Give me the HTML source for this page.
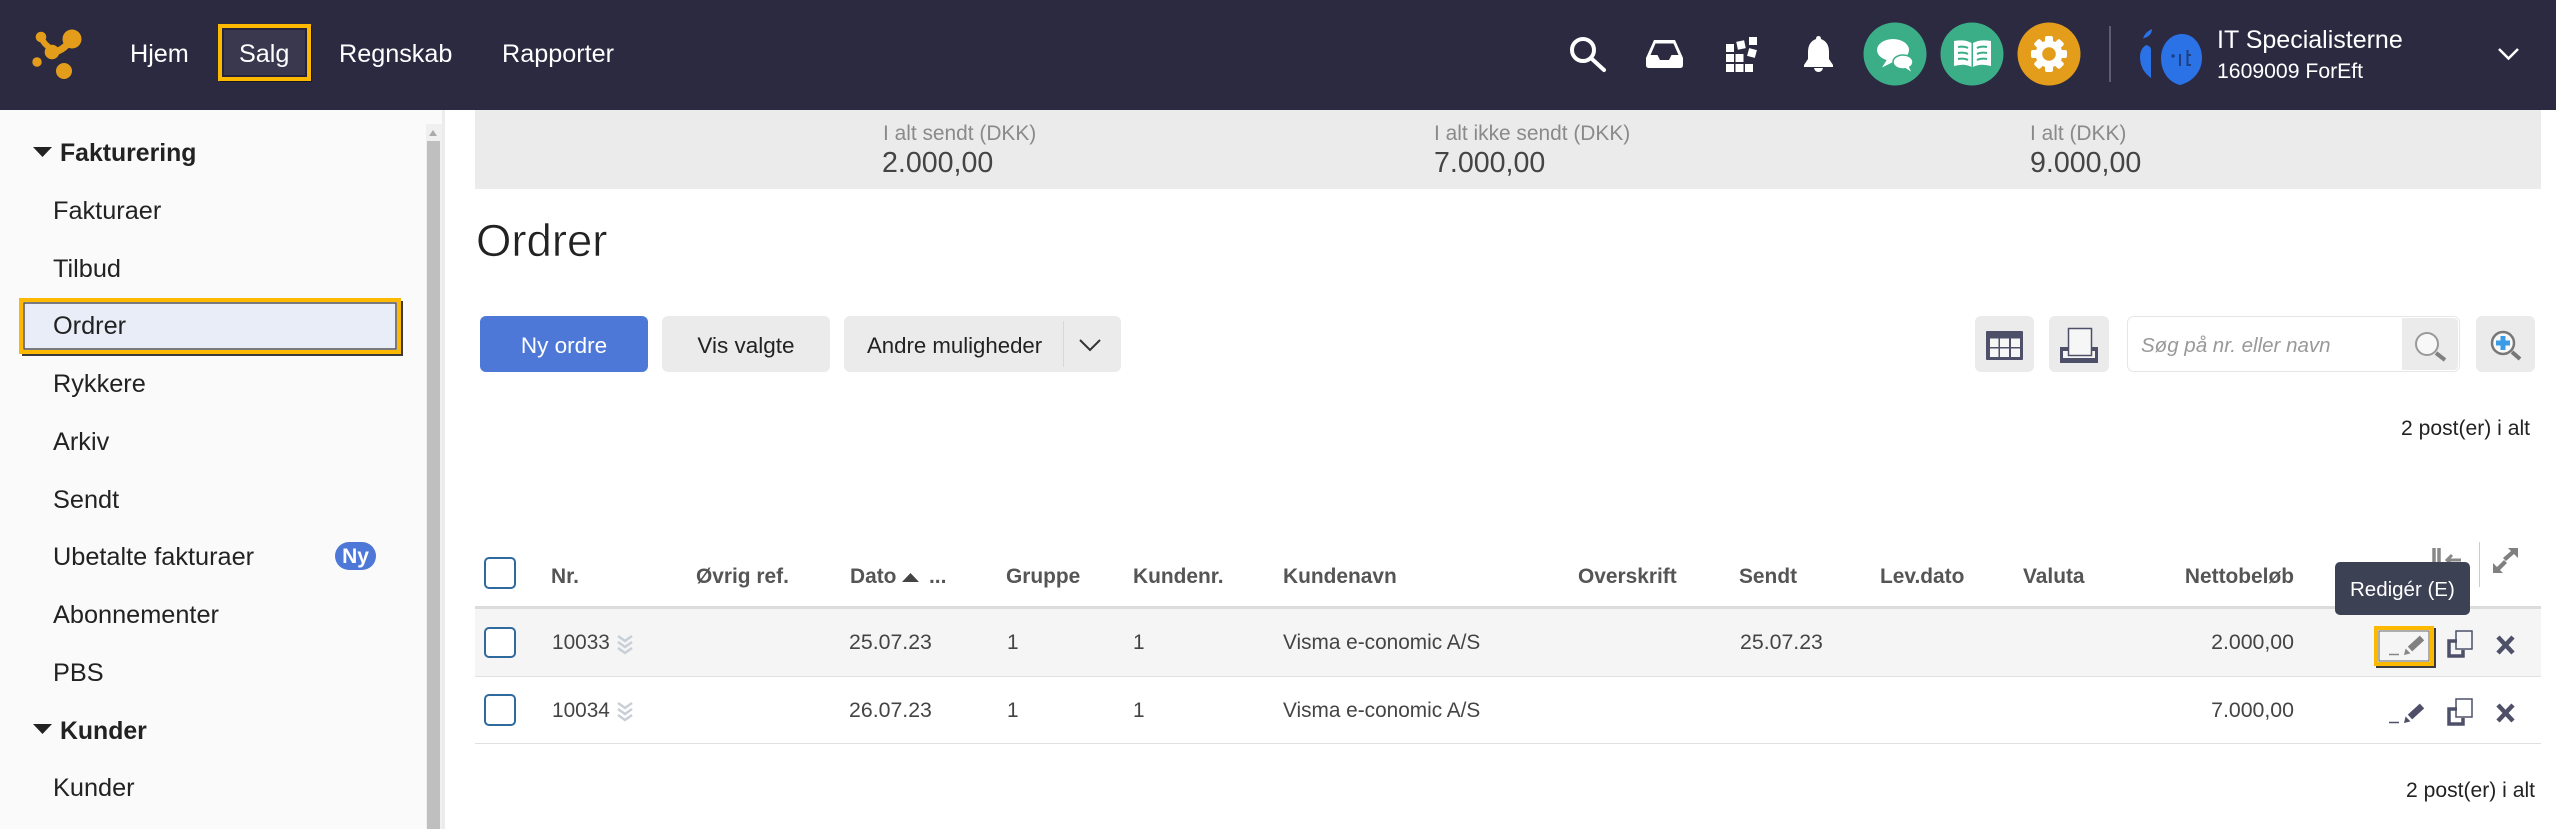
<!DOCTYPE html>
<html lang="da"><head><meta charset="utf-8"><title>Ordrer</title>
<style>
html,body{margin:0;padding:0;background:#fff;width:2556px;height:829px;overflow:hidden}
svg{display:block;font-family:"Liberation Sans",sans-serif}
</style></head><body>
<svg width="2556" height="829" viewBox="0 0 2556 829" xmlns="http://www.w3.org/2000/svg">
<rect width="2556" height="829" fill="#fff"/>
<!-- header -->
<rect width="2556" height="110" fill="#2b2a41"/>
<g fill="#e39d1b">
<circle cx="72" cy="39" r="9.500"/><circle cx="41" cy="37" r="5.300"/><circle cx="52" cy="52" r="7.300"/><circle cx="37" cy="62" r="4.700"/><circle cx="64" cy="71" r="8"/>
</g>
<path d="M41 37Q44 45 52 49" fill="none" stroke="#e39d1b" stroke-width="6"/>
<path d="M52 52Q62 52 71 40" fill="none" stroke="#e39d1b" stroke-width="7"/>
<rect x="220" y="26" width="92" height="56" fill="#1a1a24"/>
<rect x="220" y="26" width="89" height="53" fill="#3a384f" stroke="#fdb900" stroke-width="4"/>
<rect x="223" y="29" width="83" height="47" fill="none" stroke="#25243a" stroke-width="2"/>
<g font-size="25.200" fill="#fff"><text x="130" y="62">Hjem</text><text x="239" y="62">Salg</text><text x="339" y="62">Regnskab</text><text x="502" y="62">Rapporter</text></g>
<!-- header icons -->
<circle cx="1583" cy="50" r="11" fill="none" stroke="#fff" stroke-width="4"/>
<path d="M1592 59L1604 70" stroke="#fff" stroke-width="4" stroke-linecap="round"/>
<path fill="#fff" fill-rule="evenodd" d="M1654 40H1675L1683 58V65Q1683 68 1680 68H1649Q1646 68 1646 65V58ZM1655.500 43.500L1650.500 55H1657.500L1660 60H1669L1671.500 55H1678.500L1673.500 43.500Z"/>
<g fill="#fff">
<rect x="1726" y="44" width="8" height="8"/><rect x="1726" y="54" width="8" height="8"/><rect x="1735.500" y="54" width="8" height="8"/>
<rect x="1726" y="64" width="8" height="8"/><rect x="1735.500" y="64" width="8" height="8"/><rect x="1745" y="64" width="8" height="8"/>
<rect x="1737" y="41" width="8" height="8" transform="rotate(-12 1741 45)"/><rect x="1748" y="49" width="8" height="8" transform="rotate(15 1752 53)"/><rect x="1749" y="37" width="8" height="8"/>
<path d="M1818.500 36Q1821 36 1821 39Q1829 42 1829 52V59L1833 65V67H1804V65L1808 59V52Q1808 42 1816 39Q1816 36 1818.500 36Z"/>
<path d="M1814 68H1823Q1822 72 1818.500 72Q1815 72 1814 68Z"/>
</g>
<circle cx="1895" cy="54" r="31.500" fill="#3bae88"/><circle cx="1972" cy="54" r="31.500" fill="#3bae88"/><circle cx="2049" cy="54" r="31.500" fill="#e39d1b"/>
<g fill="#fff">
<ellipse cx="1893" cy="50" rx="16" ry="11"/><path d="M1888 58L1882 67.500L1897 60Z"/>
<ellipse cx="1903" cy="62" rx="10" ry="7" stroke="#3bae88" stroke-width="1.500"/><path d="M1904 67L1911 71.500L1908 65Z"/>
<path d="M1954 41Q1965 39 1971.500 43V67Q1965 63 1954 66Z"/><path d="M1991 41Q1980 39 1973 43V67Q1980 63 1991 66Z"/>
</g>
<path d="M1958 47Q1964 46 1968 48M1958 53Q1964 52 1968 54M1958 59Q1964 58 1968 60M1987 47Q1981 46 1977 48M1987 53Q1981 52 1977 54M1987 59Q1981 58 1977 60" stroke="#3bae88" stroke-width="2" fill="none"/>
<g fill="#fff"><circle cx="2049" cy="54" r="13.500"/>
<rect x="2045" y="36" width="8" height="36" rx="2"/><rect x="2045" y="36" width="8" height="36" rx="2" transform="rotate(45 2049 54)"/><rect x="2045" y="36" width="8" height="36" rx="2" transform="rotate(90 2049 54)"/><rect x="2045" y="36" width="8" height="36" rx="2" transform="rotate(135 2049 54)"/></g>
<circle cx="2049" cy="54" r="6.800" fill="#e39d1b"/>
<rect x="2109" y="26" width="2" height="56" fill="#5d5c72"/>
<path fill="#2a72e5" d="M2152 29Q2152 36 2143 38.500Q2145 32 2152 29ZM2146 45Q2151 46 2151 50V78Q2140 70 2140 57Q2140 49 2146 45Z"/>
<path fill="#2a72e5" d="M2182 34C2194 34 2202 45 2202 58C2202 72 2192 82 2180 85C2168 82 2161 71 2161 58C2161 45 2170 34 2182 34Z"/>
<circle cx="2173" cy="56" r="1.700" fill="#1f3f80"/><path d="M2179 54H2181V66H2179ZM2186.500 50H2188.500V54H2191V56H2188.500V64H2191V66H2186.500Z" fill="#1f3f80"/>
<text x="2217" y="48" font-size="25" fill="#fff">IT Specialisterne</text>
<text x="2217" y="78" font-size="21.200" fill="#fff">1609009 ForEft</text>
<path d="M2499 49L2508.500 58.500L2518 49" fill="none" stroke="#fff" stroke-width="2.500"/>
<!-- sidebar -->
<rect y="110" width="442" height="719" fill="#fafafa"/>
<rect x="426" y="124" width="16" height="705" fill="#f0f0f0"/>
<rect x="427" y="141" width="13" height="688" fill="#bfbfbf"/>
<path d="M429 136L433 130L437 136Z" fill="#aaa"/>
<rect x="442" y="110" width="3" height="719" fill="#ececec"/>
<path d="M33 147H52L42.500 157Z" fill="#222"/>
<path d="M33 724H52L42.500 734Z" fill="#222"/>
<rect x="22" y="301" width="381" height="55" fill="#3c3c3c"/>
<rect x="21" y="300" width="378" height="52" fill="#e8edf8" stroke="#fdb900" stroke-width="4"/>
<rect x="24" y="303" width="372" height="46" fill="none" stroke="#555" stroke-width="1.500"/>
<g font-size="25.300" fill="#222">
<text x="60" y="161" font-weight="700" font-size="24.800">Fakturering</text>
<text x="53" y="219">Fakturaer</text><text x="53" y="277">Tilbud</text><text x="53" y="334">Ordrer</text><text x="53" y="392">Rykkere</text><text x="53" y="450">Arkiv</text><text x="53" y="508">Sendt</text><text x="53" y="565">Ubetalte fakturaer</text><text x="53" y="623">Abonnementer</text><text x="53" y="681">PBS</text>
<text x="60" y="739" font-weight="700" font-size="24.800">Kunder</text><text x="53" y="796">Kunder</text>
</g>
<rect x="335" y="542" width="41" height="28" rx="14" fill="#4e78d8"/>
<text x="355.500" y="563" font-size="21" font-weight="700" fill="#fff" text-anchor="middle">Ny</text>
<!-- stats -->
<rect x="475" y="110" width="2066" height="79" fill="#ebebeb"/>
<g font-size="20.900" fill="#8a8a8a"><text x="883" y="140">I alt sendt (DKK)</text><text x="1434" y="140">I alt ikke sendt (DKK)</text><text x="2030" y="140">I alt (DKK)</text></g>
<g font-size="28.600" fill="#444"><text x="882" y="172">2.000,00</text><text x="1434" y="172">7.000,00</text><text x="2030" y="172">9.000,00</text></g>
<text x="476" y="256" font-size="45.500" fill="#222" stroke="#fff" stroke-width=".6">Ordrer</text>
<!-- toolbar -->
<rect x="480" y="316" width="168" height="56" rx="6" fill="#4e78d8"/>
<rect x="662" y="316" width="168" height="56" rx="6" fill="#ebebeb"/>
<rect x="844" y="316" width="277" height="56" rx="6" fill="#ebebeb"/>
<rect x="1063" y="321" width="1" height="46" fill="#d8d8d8"/>
<g font-size="22.500" text-anchor="middle"><text x="564" y="353" fill="#fff">Ny ordre</text><text x="746" y="353" fill="#222">Vis valgte</text></g>
<text x="867" y="353" font-size="22.200" fill="#222">Andre muligheder</text>
<path d="M1080 340L1090 350L1100 340" fill="none" stroke="#333" stroke-width="2"/>
<rect x="1975" y="316" width="59" height="56" rx="6" fill="#ebebeb"/>
<rect x="2049" y="316" width="60" height="56" rx="6" fill="#ebebeb"/>
<rect x="2127.500" y="316.500" width="332" height="55" rx="6" fill="#fff" stroke="#e6e6e6"/>
<path d="M2402 318H2453Q2458 318 2458 323V365Q2458 370 2453 370H2402Z" fill="#ebebeb"/>
<rect x="2476" y="316" width="59" height="56" rx="6" fill="#ebebeb"/>
<rect x="1986" y="331" width="37" height="29" rx="1" fill="#4d5068"/>
<g fill="#f6f6f6"><rect x="1990" y="338.500" width="8.500" height="8.500"/><rect x="2000" y="338.500" width="9" height="8.500"/><rect x="2011" y="338.500" width="9" height="8.500"/><rect x="1990" y="348.500" width="8.500" height="8.500"/><rect x="2000" y="348.500" width="9" height="8.500"/><rect x="2011" y="348.500" width="9" height="8.500"/></g>
<rect x="2061.500" y="348.500" width="35" height="13" fill="#f6f6f6" stroke="#4d5068" stroke-width="3"/>
<path d="M2060 347H2068V351H2060ZM2091 347H2098V351H2091ZM2060 358H2098V363H2060Z" fill="#4d5068"/>
<rect x="2068.500" y="328.500" width="23" height="27" fill="#f6f6f6" stroke="#4d5068" stroke-width="1.500"/>
<text x="2141" y="352" font-size="20.500" font-style="italic" fill="#999">Søg på nr. eller navn</text>
<circle cx="2427" cy="344" r="11" fill="#f8f8f8" stroke="#999" stroke-width="2"/>
<path d="M2436 353L2445 360" stroke="#808080" stroke-width="4"/>
<circle cx="2503" cy="343" r="11" fill="#f8f8f8" stroke="#777" stroke-width="2.500"/>
<path d="M2512 352L2520 359" stroke="#777" stroke-width="4"/>
<path d="M2503 336V350M2496 343H2510" stroke="#3a9be6" stroke-width="5"/>
<text x="2530" y="435" font-size="21.100" fill="#222" text-anchor="end">2 post(er) i alt</text>
<text x="2535" y="797" font-size="21.100" fill="#222" text-anchor="end">2 post(er) i alt</text>
<!-- table -->
<rect x="475" y="606" width="2066" height="3" fill="#dcdcdc"/>
<rect x="475" y="609" width="2066" height="67" fill="#f5f5f5"/>
<rect x="475" y="676" width="2066" height="1" fill="#e0e0e0"/>
<rect x="475" y="743" width="2066" height="1" fill="#e0e0e0"/>
<g fill="#fff" stroke="#2f6a9f" stroke-width="2"><rect x="485" y="558" width="30" height="30" rx="4"/><rect x="485" y="628" width="30" height="29" rx="4"/><rect x="485" y="695" width="30" height="30" rx="4"/></g>
<g font-size="20.900" font-weight="700" fill="#555">
<text x="551" y="583">Nr.</text><text x="696" y="583">Øvrig ref.</text><text x="850" y="583">Dato</text><text x="929" y="583">...</text>
<text x="1006" y="583">Gruppe</text><text x="1133" y="583">Kundenr.</text><text x="1283" y="583">Kundenavn</text><text x="1578" y="583">Overskrift</text><text x="1739" y="583">Sendt</text><text x="1880" y="583">Lev.dato</text><text x="2023" y="583">Valuta</text><text x="2294" y="583" text-anchor="end">Nettobeløb</text>
</g>
<path d="M902 582L910.500 573L919 582Z" fill="#444"/>
<g font-size="20.800" fill="#444">
<text x="552" y="649">10033</text><text x="849" y="649" font-size="21.300">25.07.23</text><text x="1007" y="649">1</text><text x="1133" y="649">1</text><text x="1283" y="649">Visma e-conomic A/S</text><text x="1740" y="649" font-size="21.300">25.07.23</text><text x="2294" y="649" text-anchor="end" font-size="21.300">2.000,00</text>
<text x="552" y="717">10034</text><text x="849" y="717" font-size="21.300">26.07.23</text><text x="1007" y="717">1</text><text x="1133" y="717">1</text><text x="1283" y="717">Visma e-conomic A/S</text><text x="2294" y="717" text-anchor="end" font-size="21.300">7.000,00</text>
</g>
<path d="M618 636L625 641L632 636M618 642L625 647L632 642M618 648L625 653L632 648" fill="none" stroke="#c8cfd6" stroke-width="2.500"/>
<path d="M618 703L625 708L632 703M618 709L625 714L632 709M618 715L625 720L632 715" fill="none" stroke="#c8cfd6" stroke-width="2.500"/>
<!-- column controls -->
<path d="M2434 548V562M2439 548V562" stroke="#888" stroke-width="3.500"/><path d="M2461 560H2447M2452 555L2447 560L2452 565" fill="none" stroke="#888" stroke-width="3"/>
<rect x="2479" y="542" width="1" height="45" fill="#ccc"/>
<path d="M2518 548H2508L2511 551L2503 558L2506 561L2514 554L2518 558ZM2493 573H2503L2500 570L2507 563L2504 560L2497 567L2493 563Z" fill="#808080"/>
<!-- tooltip -->
<rect x="2335" y="562" width="135" height="53" rx="5" fill="#3d4154"/>
<text x="2350" y="596" font-size="20.500" fill="#fff">Redigér (E)</text>
<!-- action icons -->
<rect x="2376" y="628" width="60" height="40" fill="#3c3c3c"/>
<rect x="2376" y="628" width="56" height="36" fill="#f5f5f5" stroke="#fdb900" stroke-width="4"/>
<rect x="2379" y="631" width="50" height="30" fill="none" stroke="#666" stroke-width="1"/>
<path d="M2389 654.500H2399M2405 654L2409 653L2406 650Z" stroke="#888" stroke-width="1.500" fill="#888"/>
<path d="M2410 649L2422 638" stroke="#808080" stroke-width="6.500"/>
<path d="M2389 722.500H2399M2405 722L2409 721L2406 718Z" stroke="#4d5068" stroke-width="1.500" fill="#4d5068"/>
<path d="M2410 717L2422 706" stroke="#4d5068" stroke-width="6.500"/>
<g fill="none" stroke="#4d5068">
<path d="M2457 641H2449V656H2463V650" stroke-width="3.500"/><rect x="2456" y="631" width="16" height="18" stroke-width="1.500"/>
<path d="M2457 709H2449V724H2463V718" stroke-width="3.500"/><rect x="2456" y="699" width="16" height="18" stroke-width="1.500"/>
<path d="M2498 637L2513 653M2513 637L2498 653" stroke-width="4.500"/>
<path d="M2498 705L2513 721M2513 705L2498 721" stroke-width="4.500"/>
</g>
</svg>
</body></html>
